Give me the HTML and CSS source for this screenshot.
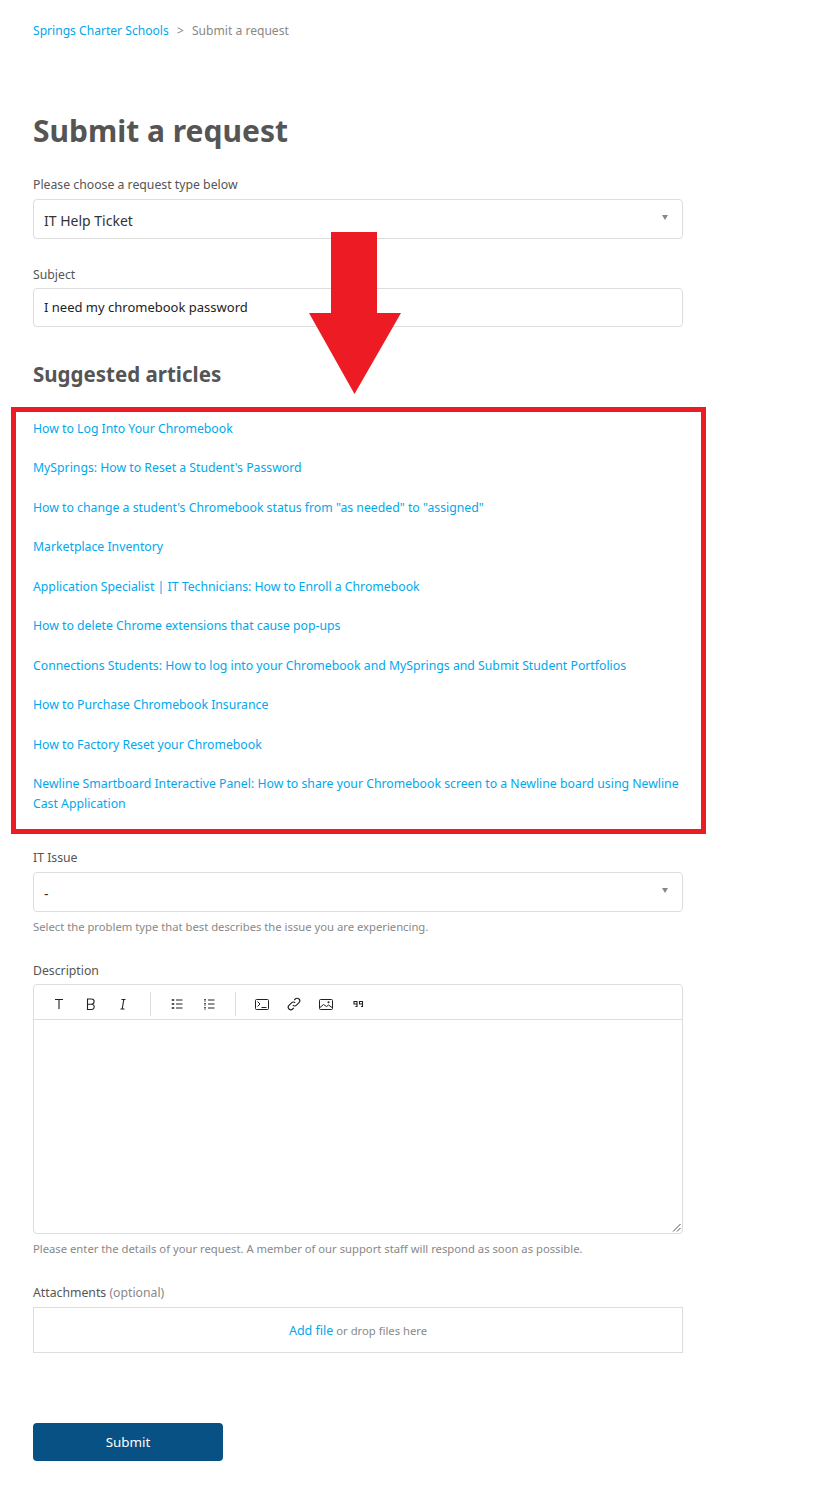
FILE: index.html
```html
<!DOCTYPE html>
<html lang="en">
<head>
    <meta charset="UTF-8">
    <meta name="viewport" content="width=device-width, initial-scale=1.0">
    <title>Submit a request</title>
    <link rel="stylesheet" href="styles.css">
</head>
<body>
    <div class="container">
        <div class="breadcrumbs">
            <a href="#">Springs Charter Schools</a>
            <span class="crumb-sep">&gt;</span>
            <span>Submit a request</span>
        </div>
        <h1>Submit a request</h1>

        <div class="field field-type">
            <label>Please choose a request type below</label>
            <div class="select">IT Help Ticket<span class="caret"></span></div>
        </div>

        <div class="field field-subject">
            <label>Subject</label>
            <div class="input">I need my chromebook password</div>
        </div>

        <h2>Suggested articles</h2>
        <ul class="articles">
            <li><a href="#">How to Log Into Your Chromebook</a></li>
            <li><a href="#">MySprings: How to Reset a Student's Password</a></li>
            <li><a href="#">How to change a student's Chromebook status from "as needed" to "assigned"</a></li>
            <li><a href="#">Marketplace Inventory</a></li>
            <li><a href="#">Application Specialist | IT Technicians: How to Enroll a Chromebook</a></li>
            <li><a href="#">How to delete Chrome extensions that cause pop-ups</a></li>
            <li><a href="#">Connections Students: How to log into your Chromebook and MySprings and Submit Student Portfolios</a></li>
            <li><a href="#">How to Purchase Chromebook Insurance</a></li>
            <li><a href="#">How to Factory Reset your Chromebook</a></li>
            <li><a href="#">Newline Smartboard Interactive Panel: How to share your Chromebook screen to a Newline board using Newline Cast Application</a></li>
        </ul>

        <div class="field field-issue">
            <label>IT Issue</label>
            <div class="select">-<span class="caret"></span></div>
            <p class="hint">Select the problem type that best describes the issue you are experiencing.</p>
        </div>

        <div class="field field-description">
            <label>Description</label>
            <div class="editor">
                <div class="toolbar">
                    <div class="tool-group">
                        <span class="tool"><svg width="16" height="16" viewBox="0 0 16 16" fill="none" stroke="#222" stroke-width="1.1"><path d="M4 3.500h8M8 3.500v9.500"/></svg></span>
                        <span class="tool"><svg width="16" height="16" viewBox="0 0 16 16" fill="none" stroke="#222" stroke-width="1.1"><path d="M4.500 3h4a2.600 2.600 0 0 1 0 5.200h-4zM4.500 8.200h4.600a2.700 2.700 0 0 1 0 5.300H4.500z"/></svg></span>
                        <span class="tool"><svg width="16" height="16" viewBox="0 0 16 16" fill="none" stroke="#222" stroke-width="1.1"><path d="M6.500 3.500h4M5.500 13h4M8.800 3.500L7.200 13"/></svg></span>
                    </div>
                    <div class="tool-group">
                        <span class="tool"><svg width="16" height="16" viewBox="0 0 16 16" fill="none" stroke="#222"><path d="M4 3.200v1.600M4 7.200v1.600M4 11.200v1.600" stroke-width="2.500"/><path d="M7 4h6.500M7 8h6.500M7 12h6.500"/></svg></span>
                        <span class="tool"><svg width="16" height="16" viewBox="0 0 16 16" fill="none" stroke="#222"><path d="M4 3v3M4 7v3M4 11v3" stroke-width="1.500" stroke-dasharray="1 .6"/><path d="M7 4h6.500M7 8h6.500M7 12h6.500"/></svg></span>
                    </div>
                    <div class="tool-group">
                        <span class="tool"><svg width="16" height="16" viewBox="0 0 16 16" fill="none" stroke="#222"><rect x="1.500" y="3.500" width="13" height="10" rx="1"/><path d="M3.500 5.500L6 8 3.500 10.500M7.500 11.500h5"/></svg></span>
                        <span class="tool"><svg width="16" height="16" viewBox="0 0 16 16" fill="none" stroke="#222" stroke-width="1.100"><path d="M6.800 9.200a2.600 2.600 0 0 0 3.700 0l2.500-2.500a2.600 2.600 0 0 0-3.700-3.700L8.200 4.100"/><path d="M9.200 6.800a2.600 2.600 0 0 0-3.700 0L3 9.300A2.600 2.600 0 0 0 6.700 13l1.100-1.100"/></svg></span>
                        <span class="tool"><svg width="16" height="16" viewBox="0 0 16 16" fill="none" stroke="#222"><rect x="1.500" y="3.500" width="13" height="10" rx="1"/><path d="M2 11.500l3.500-3 3 2 2-1.500 3.500 2.500"/><circle cx="10.500" cy="6.300" r="1" fill="#222" stroke="none"/></svg></span>
                        <span class="tool"><svg width="16" height="16" viewBox="0 0 16 16" fill="none" stroke="#222" stroke-width="1.100"><path d="M4 5.500h3v2.500H4zM7 8v2.500H5.500M9.500 5.500h3v2.500h-3zM12.500 8v2.500H11"/></svg></span>
                    </div>
                </div>
                <div class="editor-body">
                    <svg class="grip" width="9" height="9" viewBox="0 0 9 9" stroke="#555" fill="none"><path d="M1 8.500L8.500 1M5 8.500L8.500 5"/></svg>
                </div>
            </div>
            <p class="hint">Please enter the details of your request. A member of our support staff will respond as soon as possible.</p>
        </div>

        <div class="field field-attachments">
            <label>Attachments <span class="optional">(optional)</span></label>
            <div class="dropzone"><a href="#">Add file</a> or drop files here</div>
        </div>

        <button class="submit-btn">Submit</button>
    </div>

    <!-- annotations drawn over the screenshot -->
    <div class="note-box"></div>
    <svg class="note-arrow" width="92" height="162" viewBox="0 0 92 162"><path d="M22 0h46v81h24L45.500 162 0 81h22z" fill="#ed1c24"/></svg>
</body>
</html>
```

FILE: styles.css
```css
body {
    font-family: "Noto Sans", "Open Sans", Arial, sans-serif;
    font-size: 12.25px;
    line-height: 20px;
    color: #555;
    background-color: #fff;
    margin: 0;
}
a {
    color: #00a8ec;
    text-decoration: none;
}
.container {
    width: 650px;
    margin-left: 33px;
    padding-top: 21px;
    padding-bottom: 30px;
}
.breadcrumbs {
    color: #888;
    font-size: 12.1px;
}
.crumb-sep {
    margin: 0 5px;
}
h1 {
    font-size: 30px;
    line-height: 40px;
    font-weight: 700;
    color: #555;
    margin: 70px 0 0;
}
h2 {
    font-size: 20.5px;
    line-height: 28px;
    font-weight: 700;
    color: #555;
    margin: 33px 0 0;
}
.field label {
    display: block;
    height: 20px;
    line-height: 22px;
    margin-bottom: 5px;
}
.field-type {
    margin-top: 23px;
}
.field-subject {
    margin-top: 24px;
}
.field-subject label {
    line-height: 24px;
}
.field-issue {
    margin-top: 32.5px;
}
.field-description {
    margin-top: 24px;
}
.field-description label {
    margin-bottom: 4px;
}
.field-attachments {
    margin-top: 24px;
}
.select,
.input {
    position: relative;
    box-sizing: border-box;
    height: 40px;
    padding: 0 10px;
    border: 1px solid #ddd;
    border-radius: 4px;
    font-size: 14px;
    line-height: 42px;
    color: #333;
}
.input {
    height: 39px;
    font-size: 13px;
    line-height: 37px;
    color: #222;
}
.caret {
    position: absolute;
    top: 15px;
    right: 14px;
    border-left: 3px solid transparent;
    border-right: 3px solid transparent;
    border-top: 5px solid #888;
}
.articles {
    list-style: none;
    margin: 30.5px 0 0;
    padding: 0;
}
.articles li {
    margin-bottom: 19.5px;
}
.hint {
    font-size: 11.25px;
    line-height: 18px;
    color: #888;
    margin: 6px 0 0;
}
.editor {
    border: 1px solid #ddd;
    border-radius: 4px;
    box-sizing: border-box;
    height: 250px;
    display: flex;
    flex-direction: column;
}
.toolbar {
    height: 30px;
    flex-shrink: 0;
    display: flex;
    align-items: center;
    padding-top: 4px;
    padding-left: 17px;
    border-bottom: 1px solid #ddd;
}
.tool-group {
    display: flex;
    height: 24px;
    align-items: center;
    gap: 16px;
    padding-right: 18.5px;
    margin-right: 18px;
    border-right: 1px solid #ddd;
}
.tool-group:last-child {
    border-right: none;
}
.tool {
    display: flex;
    width: 16px;
    height: 16px;
}
.editor-body {
    flex: 1;
    position: relative;
}
.grip {
    position: absolute;
    right: 1px;
    bottom: 1px;
}
.optional {
    color: #888;
}
.dropzone {
    box-sizing: border-box;
    height: 46px;
    border: 1px solid #ddd;
    color: #888;
    font-size: 11.25px;
    line-height: 46px;
    text-align: center;
}
.dropzone a {
    font-size: 12.5px;
}
.submit-btn {
    display: block;
    width: 190px;
    height: 38px;
    margin-top: 70px;
    border: none;
    border-radius: 4px;
    background-color: #085185;
    color: #fff;
    font-family: inherit;
    font-size: 13.4px;
    cursor: pointer;
}
.note-box {
    position: absolute;
    left: 11px;
    top: 407px;
    width: 685px;
    height: 417px;
    border: 5px solid #ed1c24;
}
.note-arrow {
    position: absolute;
    left: 309px;
    top: 232px;
}
```
